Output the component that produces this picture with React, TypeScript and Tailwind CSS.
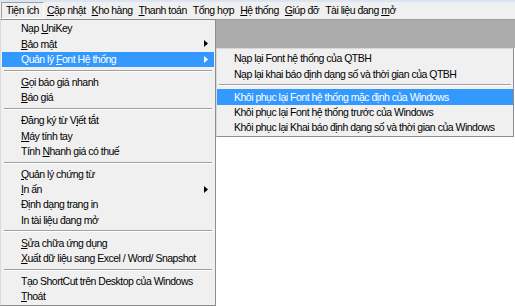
import React from "react";

type Item = { label: string; u?: number; arrow?: boolean; hi?: boolean } | "sep";

const mainItems: Item[] = [
  { label: "Nạp UniKey", u: 4 },
  { label: "Bảo mật", u: 0, arrow: true },
  { label: "Quản lý Font Hệ thống", u: 8, arrow: true, hi: true },
  "sep",
  { label: "Gọi báo giá nhanh", u: 0 },
  { label: "Báo giá", u: 0 },
  "sep",
  { label: "Đăng ký từ Viết tắt", u: 12 },
  { label: "Máy tính tay", u: 0 },
  { label: "Tính Nhanh giá có thuế", u: 5 },
  "sep",
  { label: "Quản lý chứng từ", u: 0 },
  { label: "In ấn", u: 0, arrow: true },
  { label: "Định dạng trang in" },
  { label: "In tài liệu đang mở" },
  "sep",
  { label: "Sửa chữa ứng dụng", u: 0 },
  { label: "Xuất dữ liệu sang Excel / Word/ Snapshot", u: 0 },
  "sep",
  { label: "Tạo ShortCut trên Desktop của Windows" },
  { label: "Thoát", u: 0 },
];

const subItems: Item[] = [
  { label: "Nạp lại Font hệ thống của QTBH" },
  { label: "Nạp lại khai báo định dạng số và thời gian của QTBH" },
  "sep",
  { label: "Khôi phục lại Font hệ thống mặc định của Windows", hi: true },
  { label: "Khôi phục lại Font hệ thống trước của Windows" },
  { label: "Khôi phục lại Khai báo định dạng số và thời gian của Windows" },
];

function Label({ text, u }: { text: string; u?: number }) {
  if (u === undefined) return <span>{text}</span>;
  return (
    <span>
      {text.slice(0, u)}
      <span className="underline underline-offset-[1px]">{text.slice(u, u + 1)}</span>
      {text.slice(u + 1)}
    </span>
  );
}

function Arrow({ white }: { white?: boolean }) {
  return (
    <svg width="4" height="7" viewBox="0 0 4 7" className="absolute right-[6px] top-[4px]">
      <path d="M0 0 L4 3.5 L0 7 Z" fill={white ? "#ffffff" : "#000000"} />
    </svg>
  );
}

function MenuList({ items, padLeft }: { items: Item[]; padLeft: string }) {
  return (
    <>
      {items.map((it, i) =>
        it === "sep" ? (
          <div key={i} className="h-[7.7px] flex flex-col justify-center px-[2px]">
            <div className="h-px bg-[#a0a0a0]" />
            <div className="h-px bg-white" />
          </div>
        ) : (
          <div
            key={i}
            className={
              "relative h-[15.3px] flex items-center whitespace-nowrap " +
              padLeft +
              (it.hi ? " bg-[#3399ff] text-white" : " text-black")
            }
          >
            <Label text={it.label} u={it.u} />
            {it.arrow && <Arrow white={it.hi} />}
          </div>
        )
      )}
    </>
  );
}

const bar: { label: string; u?: number }[] = [
  { label: "Cập nhật", u: 0 },
  { label: "Kho hàng", u: 0 },
  { label: "Thanh toán", u: 0 },
  { label: "Tổng hợp" },
  { label: "Hệ thống", u: 0 },
  { label: "Giúp đỡ", u: 0 },
  { label: "Tài liệu đang mở", u: 14 },
];

export default function App() {
  return (
    <div className="relative w-[515px] h-[307px] overflow-hidden bg-white font-['Liberation_Sans',Arial,sans-serif] text-[10.5px] tracking-[-0.5px] leading-none text-black">
      <div className="h-[2px] bg-[#dbe5f1]" />
      <div className="h-[17px] bg-[#f0f0f0] flex items-stretch pl-[1px]">
        <div className="flex items-center px-[4px] border-t border-l border-[#a0a0a0] border-r-white border-b-white border-r border-b">
          Tiện ích
        </div>
        {bar.map((b, i) => (
          <div key={i} className="flex items-center px-[3px]">
            <Label text={b.label} u={b.u} />
          </div>
        ))}
      </div>
      <div className="flex flex-col">
        <div className="h-[29px] bg-[#ababab] border-t border-[#9c9c9c]" />
        <div className="flex-1 bg-white" />
      </div>

      <div className="absolute left-0 top-[19px] w-[216px] h-[287px] bg-[#f0f0f0] border border-[#8e8e8e] border-l-[#d8d8d8] pt-[1px] px-px">
        <MenuList items={mainItems} padLeft="pl-[19px]" />
      </div>

      <div className="absolute left-[216px] top-[48px] w-[298px] bg-[#f0f0f0] border border-[#8e8e8e] border-l-[#d8d8d8] border-t-[#d8d8d8] pt-[2px] pb-[1px]">
        <MenuList items={subItems} padLeft="pl-[17px]" />
      </div>
    </div>
  );
}
